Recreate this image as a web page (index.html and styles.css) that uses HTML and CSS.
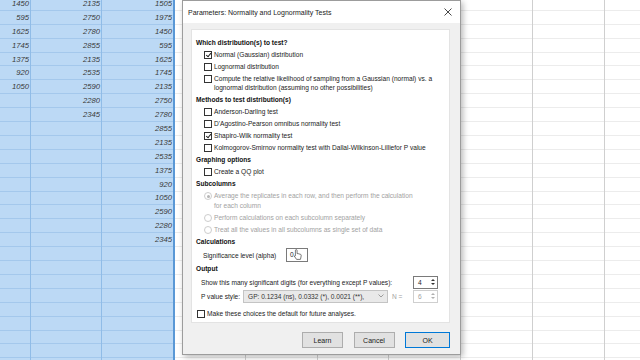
FILE: index.html
```html
<!DOCTYPE html>
<html lang="en">
<head>
  <meta charset="UTF-8">
  <title>Parameters: Normality and Lognormality Tests</title>
  <link rel="stylesheet" href="styles.css">
</head>
<body>

  <!-- hoja de datos de fondo -->
  <div class="sheet">
    <div class="col sel c-first">
      <div class="cell">1450</div>
      <div class="cell">595</div>
      <div class="cell">1625</div>
      <div class="cell">1745</div>
      <div class="cell">1375</div>
      <div class="cell">920</div>
      <div class="cell">1050</div>
    </div>
    <div class="col sel c-71">
      <div class="cell">2135</div>
      <div class="cell">2750</div>
      <div class="cell">2780</div>
      <div class="cell">2855</div>
      <div class="cell">2135</div>
      <div class="cell">2535</div>
      <div class="cell">2590</div>
      <div class="cell">2280</div>
      <div class="cell">2345</div>
    </div>
    <div class="col sel sel-end">
      <div class="cell">1505</div>
      <div class="cell">1975</div>
      <div class="cell">1450</div>
      <div class="cell">595</div>
      <div class="cell">1625</div>
      <div class="cell">1745</div>
      <div class="cell">2135</div>
      <div class="cell">2750</div>
      <div class="cell">2780</div>
      <div class="cell">2855</div>
      <div class="cell">2135</div>
      <div class="cell">2535</div>
      <div class="cell">1375</div>
      <div class="cell">920</div>
      <div class="cell">1050</div>
      <div class="cell">2590</div>
      <div class="cell">2280</div>
      <div class="cell">2345</div>
    </div>
    <div class="col c-71"></div>
    <div class="col c-72"></div>
    <div class="col c-71"></div>
    <div class="col c-72"></div>
    <div class="col c-72"></div>
    <div class="col c-72"></div>
    <div class="col c-last"></div>
  </div>

  <div class="dialog">
    <div class="titlebar">
      <span>Parameters: Normality and Lognormality Tests</span>
      <svg class="close" width="8" height="8" viewBox="0 0 8 8">
        <path d="M0.5 0.5 L7.5 7.5 M7.5 0.5 L0.5 7.5" stroke="#333" stroke-width="0.9"/>
      </svg>
    </div>

    <div class="dlg-body">
      <div class="panel">
        <div class="head">Which distribution(s) to test?</div>
        <div class="opt"><span class="box checked"></span><span>Normal (Gaussian) distribution</span></div>
        <div class="opt"><span class="box"></span><span>Lognormal distribution</span></div>
        <div class="opt"><span class="box"></span><span>Compute the relative likelihood of sampling from a Gaussian (normal) vs. a<br>lognormal distribution (assuming no other possibilities)</span></div>

        <div class="head">Methods to test distribution(s)</div>
        <div class="opt"><span class="box"></span><span>Anderson-Darling test</span></div>
        <div class="opt"><span class="box"></span><span>D'Agostino-Pearson omnibus normality test</span></div>
        <div class="opt"><span class="box checked"></span><span>Shapiro-Wilk normality test</span></div>
        <div class="opt"><span class="box"></span><span>Kolmogorov-Smirnov normality test with Dallal-Wilkinson-Lilliefor P value</span></div>

        <div class="head">Graphing options</div>
        <div class="opt"><span class="box"></span><span>Create a QQ plot</span></div>

        <div class="head">Subcolumns</div>
        <div class="opt disabled"><span class="box radio on"></span><span>Average the replicates in each row, and then perform the calculation<br>for each column</span></div>
        <div class="opt disabled"><span class="box radio"></span><span>Perform calculations on each subcolumn separately</span></div>
        <div class="opt disabled"><span class="box radio"></span><span>Treat all the values in all subcolumns as single set of data</span></div>

        <div class="head">Calculations</div>
        <div class="field">
          <span class="field-label">Significance level (alpha)</span>
          <div class="input">0.
            <svg class="pointer" width="8" height="11" viewBox="0 0 8 11">
              <path d="M2.2 0.6 C2.9 0.6 3.1 1 3.1 1.6 L3.1 4.6 L4.3 4.7 L6.4 5.3 C7.1 5.5 7.3 5.9 7.2 6.6 L6.8 9 L6.4 10.4 L2.6 10.4 L0.6 7.6 C0.3 7.1 0.6 6.5 1.2 6.7 L1.4 6.8 L1.4 1.6 C1.4 1 1.6 0.6 2.2 0.6 Z" fill="#fff" stroke="#222" stroke-width="0.6"/>
            </svg>
          </div>
        </div>

        <div class="head">Output</div>
        <div class="out">
          <span>Show this many significant digits (for everything except P values):</span>
          <div class="spin">
            <span class="spin-val">4</span>
            <span class="spin-btns"><i class="up"></i><i class="down"></i></span>
          </div>
        </div>
        <div class="out">
          <span class="pv-label">P value style:</span>
          <div class="combo">
            <span>GP: 0.1234 (ns), 0.0332 (*), 0.0021 (**),</span>
            <svg width="6" height="4" viewBox="0 0 6 4"><path d="M0.5 0.5 L3 3 L5.5 0.5" fill="none" stroke="#888" stroke-width="0.8"/></svg>
          </div>
          <span class="n-label">N =</span>
          <div class="spin off">
            <span class="spin-val">6</span>
            <span class="spin-btns"><i class="up"></i><i class="down"></i></span>
          </div>
        </div>
        <div class="opt default-opt"><span class="box"></span><span>Make these choices the default for future analyses.</span></div>
      </div>

      <div class="actions">
        <button class="btn">Learn</button>
        <button class="btn">Cancel</button>
        <button class="btn ok">OK</button>
      </div>
    </div>
  </div>

</body>
</html>
```

FILE: styles.css
```css
:root {
  --sel-bg: #bcd9f5;
  --sel-line: #a4c8ec;
  --sel-edge: #5a98d6;
  --grid-line: #ececec;
  --grid-col: #cfcfcf;
  --dlg-bg: #f0f0f0;
  --text: #1b1b1b;
  --muted: #a2a2a2;
}

body {
  margin: 0;
  width: 640px;
  height: 360px;
  overflow: hidden;
  position: relative;
  background: #fff;
  font-family: "Liberation Sans", Arial, sans-serif;
}

/* Hoja */
.sheet {
  display: flex;
  height: 363px;
  margin-top: -3px;
}

.col {
  height: 100%;
  box-sizing: border-box;
  border-right: 1px solid var(--grid-col);
  background: repeating-linear-gradient(to bottom, transparent 0, transparent 12.9px, var(--grid-line) 12.9px, var(--grid-line) 13.9px);
}

.col.sel {
  background-color: var(--sel-bg);
  background-image: repeating-linear-gradient(to bottom, transparent 0, transparent 12.9px, var(--sel-line) 12.9px, var(--sel-line) 13.9px);
  border-right-color: #90bce7;
}

.c-first { width: 31px; }
.c-71 { width: 71px; }
.c-72 { width: 72px; }
.c-last { flex: 1; border-right: none; }

.col.sel-end {
  width: 73px;
  border-right: 2px solid var(--sel-edge);
}

.cell {
  height: 13.9px;
  line-height: 13.4px;
  text-align: right;
  padding-right: 1px;
  font-size: 7.7px;
  font-style: italic;
  color: #3a3a3a;
}

/* Dialogo */
.dialog {
  position: absolute;
  left: 182px;
  top: 0;
  width: 279px;
  height: 355px;
  box-sizing: border-box;
  border: 1px solid #9c9c9c;
  background: var(--dlg-bg);
  box-shadow: 2px 2px 6px rgba(0, 0, 0, 0.28);
  display: flex;
  flex-direction: column;
}

.titlebar {
  height: 22px;
  flex: none;
  background: #fff;
  display: flex;
  align-items: center;
  justify-content: space-between;
  padding: 0 8px 0 5px;
  font-size: 7px;
  color: #222;
}

.dlg-body {
  flex: 1;
  padding: 6px 10px 0 8px;
  display: flex;
  flex-direction: column;
}

.panel {
  height: 294px;
  box-sizing: border-box;
  background: #fff;
  border: 1px solid #e3e3e3;
  padding: 6.7px 11px 0 4px;
  font-size: 6.6px;
  color: var(--text);
}

.head {
  font-weight: bold;
  line-height: 9.5px;
  padding: 1.25px 0;
  color: #111;
}

.opt {
  display: flex;
  align-items: flex-start;
  gap: 2px;
  line-height: 9.5px;
  padding: 1.25px 0 1.25px 8px;
}

.opt.disabled {
  color: var(--muted);
}

.box {
  flex: none;
  width: 8px;
  height: 8px;
  margin-top: 0.75px;
  box-sizing: border-box;
  border: 1px solid #333;
  background: #fff;
  position: relative;
}

.box.checked::after {
  content: "";
  position: absolute;
  left: 1.6px;
  top: 0.2px;
  width: 2.2px;
  height: 4.2px;
  border-right: 1px solid #222;
  border-bottom: 1px solid #222;
  transform: rotate(40deg);
}

.box.radio {
  border-radius: 50%;
  border-color: #cdcdcd;
}

.box.radio.on::after {
  content: "";
  position: absolute;
  left: 1.5px;
  top: 1.5px;
  width: 3px;
  height: 3px;
  border-radius: 50%;
  background: #b5b5b5;
}

.field {
  display: flex;
  align-items: center;
  height: 15.5px;
  padding-left: 7px;
}

.field-label {
  width: 83px;
}

.input {
  position: relative;
  width: 22px;
  height: 14px;
  box-sizing: border-box;
  border: 1px solid #7a7a7a;
  padding-left: 3px;
  line-height: 12px;
}

.pointer {
  position: absolute;
  left: 7px;
  top: 0px;
}

.out {
  display: flex;
  align-items: center;
  height: 14px;
  padding-left: 5px;
}

.out .spin {
  margin-left: auto;
}

.spin {
  width: 25px;
  height: 13px;
  box-sizing: border-box;
  border: 1px solid #7a7a7a;
  display: flex;
  background: #fff;
}

.spin-val {
  flex: 1;
  padding-left: 4px;
  line-height: 11px;
}

.spin-btns {
  width: 8px;
  display: flex;
  flex-direction: column;
  justify-content: center;
  align-items: center;
  gap: 2px;
}

.spin-btns i {
  width: 0;
  height: 0;
  border-left: 2px solid transparent;
  border-right: 2px solid transparent;
}

.spin-btns .up { border-bottom: 2.5px solid #333; }
.spin-btns .down { border-top: 2.5px solid #333; }

.spin.off {
  border-color: #cfcfcf;
  color: var(--muted);
}

.spin.off .up { border-bottom-color: #b0b0b0; }
.spin.off .down { border-top-color: #b0b0b0; }

.pv-label {
  width: 42px;
}

.combo {
  width: 145px;
  height: 13px;
  box-sizing: border-box;
  border: 1px solid #c4c4c4;
  background: #e9e9e9;
  display: flex;
  align-items: center;
  justify-content: space-between;
  padding: 0 3px 0 4px;
  color: #333;
}

.n-label {
  margin-left: 4px;
  color: var(--muted);
}

.opt.default-opt {
  padding-left: 1px;
  margin-top: 4.4px;
}

/* Botones */
.actions {
  display: flex;
  justify-content: flex-end;
  gap: 10.5px;
  margin-top: 9px;
}

.btn {
  width: 41px;
  height: 16px;
  padding: 0;
  background: #e1e1e1;
  border: 1px solid #adadad;
  font-family: "Liberation Sans", Arial, sans-serif;
  font-size: 7px;
  color: #222;
}

.btn.ok {
  width: 45px;
  border-color: #0078d7;
}
```
